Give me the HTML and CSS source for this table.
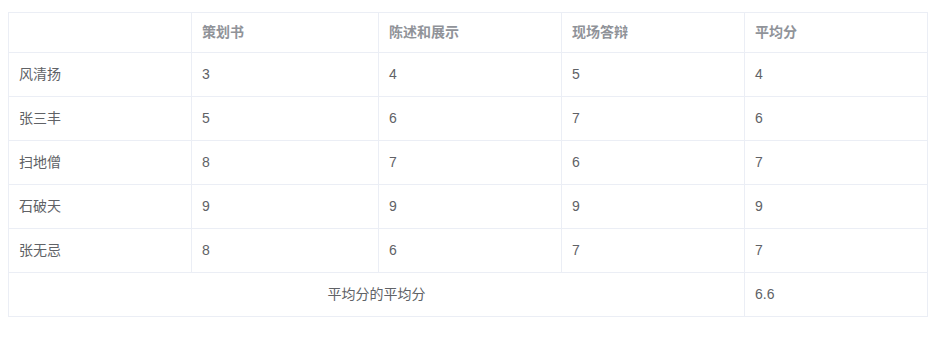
FILE: index.html
```html
<!DOCTYPE html>
<html lang="zh">
<head>
<meta charset="utf-8">
<link rel="stylesheet" href="styles.css">
</head>
<body>
<div class="wrap">
<table class="score-table">
<colgroup>
<col class="c1"><col class="c2"><col class="c3"><col class="c4"><col class="c5">
</colgroup>
<thead>
<tr><th></th><th>策划书</th><th>陈述和展示</th><th>现场答辩</th><th>平均分</th></tr>
</thead>
<tbody>
<tr><td>风清扬</td><td>3</td><td>4</td><td>5</td><td>4</td></tr>
<tr><td>张三丰</td><td>5</td><td>6</td><td>7</td><td>6</td></tr>
<tr><td>扫地僧</td><td>8</td><td>7</td><td>6</td><td>7</td></tr>
<tr><td>石破天</td><td>9</td><td>9</td><td>9</td><td>9</td></tr>
<tr><td>张无忌</td><td>8</td><td>6</td><td>7</td><td>7</td></tr>
<tr><td colspan="4" class="center">平均分的平均分</td><td>6.6</td></tr>
</tbody>
</table>
</div>
</body>
</html>
```
FILE: styles.css
```css
html, body {
  margin: 0;
  padding: 0;
  background: #fff;
}
.wrap {
  padding: 12px 8px;
}
.score-table {
  table-layout: fixed;
  border-collapse: separate;
  border-spacing: 0;
  width: 920px;
  border-top: 1px solid #ebeef5;
  border-left: 1px solid #ebeef5;
  font-family: "Liberation Sans", "Noto Sans CJK SC", sans-serif;
  font-size: 14px;
  color: #606266;
}
.c1 { width: 183px; }
.c2 { width: 187px; }
.c3 { width: 183px; }
.c4 { width: 183px; }
.c5 { width: 183px; }
.score-table th,
.score-table td {
  box-sizing: border-box;
  border-right: 1px solid #ebeef5;
  border-bottom: 1px solid #ebeef5;
  padding: 0 10px;
  text-align: left;
  line-height: 23px;
}
.score-table th {
  height: 40px;
  color: #909399;
  font-weight: bold;
}
.score-table td {
  height: 44px;
}
.score-table td.center {
  text-align: center;
}
```
